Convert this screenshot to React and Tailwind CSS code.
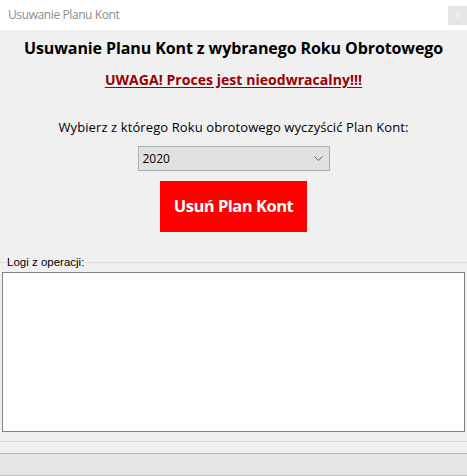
export default function App() {
  return (
    <div className="w-[467px] h-[476px] bg-[#f0f0f0] flex flex-col overflow-hidden" style={{ fontFamily: '"Open Sans", "Noto Sans", sans-serif' }}>
      {/* title bar */}
      <div className="h-[30px] bg-white flex items-center justify-between shrink-0">
        <span className="pl-[8px] text-[12px] text-[#8c8c8c] leading-none tracking-[-0.4px]">Usuwanie Planu Kont</span>
        <div className="w-[19px] h-[19px] bg-[#e6e6e6] flex items-center justify-center">
          <div className="flex flex-col gap-[1px]">
            <div className="w-[4px] h-[1px] bg-[#f4f4f4]" />
            <div className="w-[4px] h-[1px] bg-[#f4f4f4]" />
            <div className="w-[4px] h-[1px] bg-[#f4f4f4]" />
          </div>
        </div>
      </div>

      <div className="flex flex-col items-center">
        <h1 className="mt-[7px] text-[16px] font-bold text-black leading-[22px] tracking-[-0.1px]">
          Usuwanie Planu Kont z wybranego Roku Obrotowego
        </h1>
        <p className="mt-[11px] text-[14px] font-bold text-[#990000] underline underline-offset-[2px] leading-[20px] tracking-[0.05px]">
          UWAGA! Proces jest nieodwracalny!!!
        </p>
        <p className="mt-[28px] text-[13px] text-black leading-[18px] tracking-[0.1px]">
          Wybierz z którego Roku obrotowego wyczyścić Plan Kont:
        </p>
        <div className="mt-[10px] w-[192px] h-[25px] bg-[#e1e1e1] border border-[#adadad] flex items-center justify-between pl-[4px] pr-[6px]">
          <span className="text-[12px] text-black leading-none">2020</span>
          <svg width="9" height="5" viewBox="0 0 9 5" fill="none">
            <path d="M0.5 0.5 L4.5 4.5 L8.5 0.5" stroke="#606060" strokeWidth="1" />
          </svg>
        </div>
        <div className="mt-[10px] w-[147px] h-[51px] bg-[#ff0000] flex items-center justify-center">
          <span className="text-[16.5px] font-bold text-white leading-none tracking-[-0.5px]">Usuń Plan Kont</span>
        </div>
      </div>

      {/* group box */}
      <div className="mt-[30px] relative">
        <div className="border-t border-[#dcdcdc] h-0" />
        <span
          className="absolute left-[6px] top-[-7px] bg-[#f0f0f0] px-[1px] text-[11.5px] leading-[14px] text-black"
          style={{ fontFamily: '"Liberation Sans", Arial, sans-serif' }}
        >
          Logi z operacji:
        </span>
      </div>
      <div className="mt-[9px] mx-[2px] h-[160px] bg-white border border-[#828282]" />

      <div className="mt-[9px] h-[1px] bg-[#d9d9d9]" />
      <div className="h-[11px] bg-[#f0f0f0]" />
      <div className="h-[1px] bg-[#b9b9b9]" />
      <div className="flex-1 bg-[#e5e5e5] border-b border-[#c2c2c2]" />
    </div>
  );
}
